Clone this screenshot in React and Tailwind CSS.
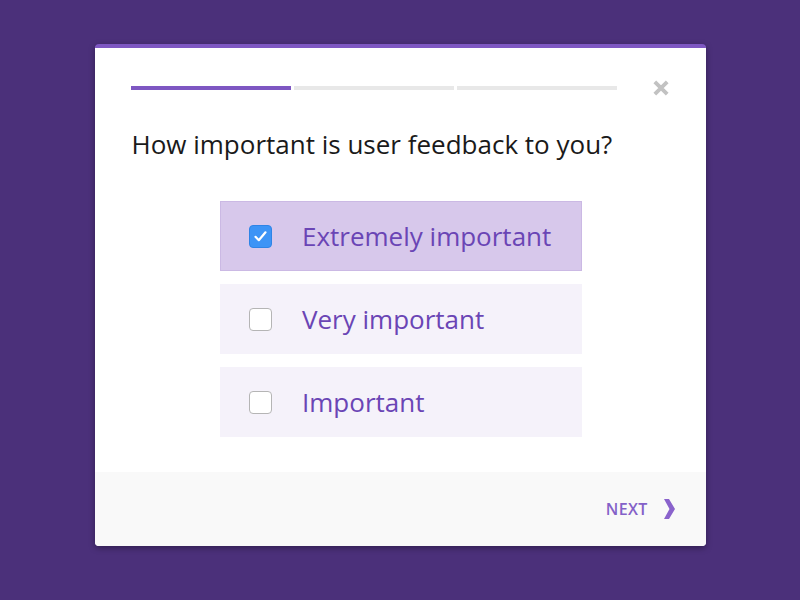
import React, { useState } from "react";

const options = ["Extremely important", "Very important", "Important"];

export default function App() {
  const [sel, setSel] = useState(0);
  return (
    <div className="w-[800px] h-[600px] bg-[#4b307a] flex items-start justify-center pt-[44px]" style={{ fontFamily: '"Open Sans", "Noto Sans", sans-serif' }}>
      <div className="w-[611px] h-[502px] bg-white rounded-[4px] border-t-4 border-[#7e57c2] shadow-[0_2px_6px_rgba(0,0,0,0.35)] flex flex-col overflow-hidden">
        <div className="flex-1 px-[36px]">
          <div className="flex items-center mt-[38px] h-[4px]">
            <div className="flex gap-[3px] w-[486px]">
              <div className="h-[4px] w-[160px] bg-[#7e57c2]"></div>
              <div className="h-[4px] w-[160px] bg-[#e8e8e8]"></div>
              <div className="h-[4px] w-[160px] bg-[#e8e8e8]"></div>
            </div>
            <div className="ml-[35px]">
              <svg width="18" height="18" viewBox="0 0 18 18">
                <path d="M2.8 2.8 L15.2 15.2 M15.2 2.8 L2.8 15.2" stroke="#c2c2c2" strokeWidth="3.8" strokeLinecap="butt" />
              </svg>
            </div>
          </div>
          <div className="mt-[37px] text-[26px] leading-[34px] text-[#1a1a1a] ml-[1px]">How important is user feedback to you?</div>
          <div className="flex flex-col items-center gap-[13px] mt-[40px] pl-[2px]">
            {options.map((o, i) => (
              <div
                key={o}
                onClick={() => setSel(i)}
                className={
                  "w-[362px] h-[70px] flex items-center cursor-pointer " +
                  (sel === i ? "bg-[#d7c8eb] border border-[#cbb9e4] pl-[28px]" : "bg-[#f5f2fa] pl-[29px]")
                }
              >
                {sel === i ? (
                  <div className="w-[23px] h-[23px] rounded-[4px] bg-[#3d94f6] border border-[#2f84e6] flex items-center justify-center">
                    <svg width="15" height="15" viewBox="0 0 15 15">
                      <path d="M2.5 7.8 L5.8 11.2 L12.5 3.3" fill="none" stroke="white" strokeWidth="2.2" strokeLinecap="round" strokeLinejoin="round" />
                    </svg>
                  </div>
                ) : (
                  <div className="w-[23px] h-[23px] rounded-[4px] bg-white border-[1.5px] border-[#b5b5b5]"></div>
                )}
                <span className="ml-[30px] text-[26px] text-[#6a45b5]">{o}</span>
              </div>
            ))}
          </div>
        </div>
        <div className="h-[74px] bg-[#f9f9f9] flex items-center justify-end pr-[30px]">
          <span className="text-[16px] font-semibold text-[#8461c8] tracking-[0.3px]">NEXT</span>
          <svg className="ml-[14px]" width="14" height="22" viewBox="0 0 14 22">
            <path d="M2 1 L7 1 L13 11 L7 21 L2 21 L7.5 11 Z" fill="#8a63cc" />
          </svg>
        </div>
      </div>
    </div>
  );
}
